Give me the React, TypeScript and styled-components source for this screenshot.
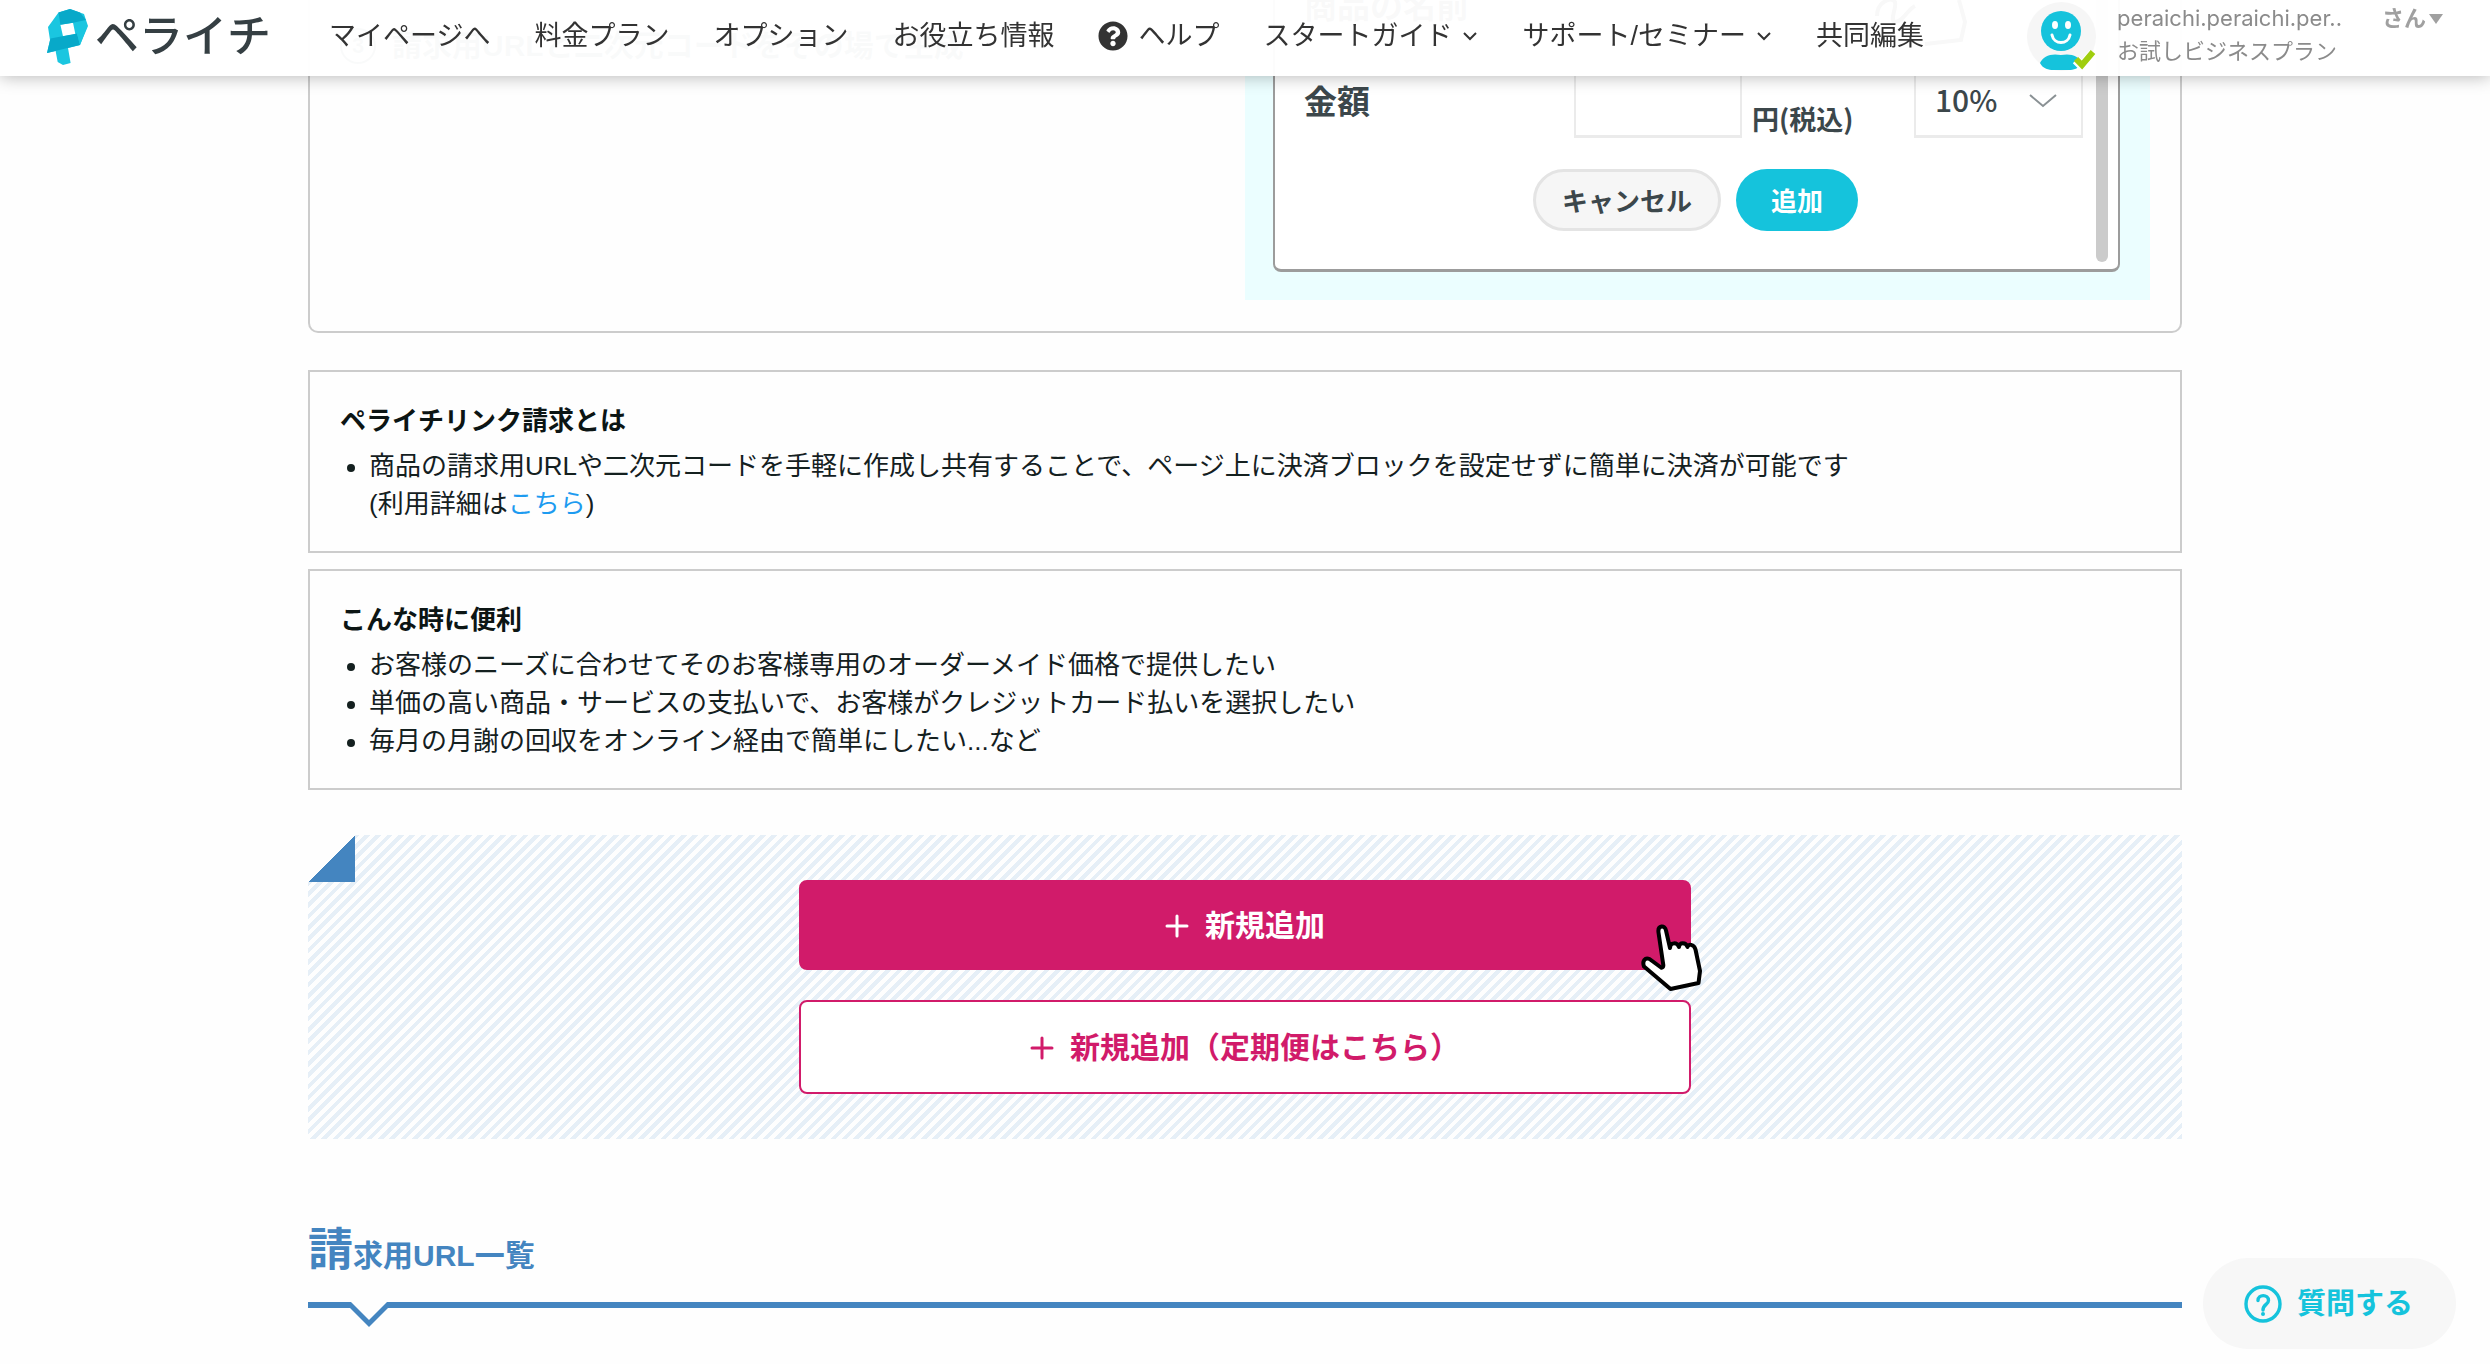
import React from 'react';
import styled, { createGlobalStyle } from 'styled-components';

const color = {
  text: '#14201f',
  navText: '#333333',
  muted: '#8b8b8b',
  line: '#cccccc',
  cyan: '#15c3dc',
  blue: '#4485c0',
  pink: '#d11b6a',
  link: '#1d9bf0',
};

const GlobalStyle = createGlobalStyle`
  *, *::before, *::after { box-sizing: border-box; }
  body {
    margin: 0;
    background: #fefefe;
    color: ${color.text};
    font-family: "Liberation Sans", "Noto Sans CJK JP", sans-serif;
    font-size: 26px;
    line-height: 38px;
  }
  button, input, select { font: inherit; color: inherit; margin: 0; }
  a { color: inherit; text-decoration: none; }
`;

/* ---------- header ---------- */

const Header = styled.header`
  position: fixed;
  inset: 0 0 auto 0;
  z-index: 10;
  height: 76px;
  display: flex;
  align-items: flex-start;
  padding: 0 47px;
  background: rgba(255, 255, 255, 0.97);
  box-shadow: 0 1px 16px rgba(0, 0, 0, 0.28);
`;

const Brand = styled.a`
  display: flex;
  align-items: center;
  gap: 6px;
  height: 74px;
  margin-right: 58px;
  color: #353f43;
  font-size: 44px;
  font-weight: 500;
  white-space: nowrap;
`;

const Nav = styled.nav`
  display: flex;
  align-items: center;
  gap: 44px;
  height: 72px;
  color: ${color.navText};
  font-size: 27px;
  white-space: nowrap;
`;

const NavLink = styled.a`
  display: flex;
  align-items: center;
  gap: 10px;
`;

const User = styled.div`
  display: flex;
  align-items: flex-start;
  margin-left: auto;
  padding-top: 2px;
  color: ${color.muted};
  font-size: 22px;
  line-height: 33px;
  white-space: nowrap;
`;

const UserNames = styled.div`
  margin: 0 40px 0 21px;
  font-family: Inter, "Noto Sans CJK JP", sans-serif;
`;

const UserMenu = styled.button`
  display: flex;
  align-items: center;
  gap: 3px;
  padding: 0;
  border: 0;
  background: none;
  color: #a0a0a0;
  font-weight: 700;
`;

/* ---------- page ---------- */

const Main = styled.main`
  width: 100%;
  max-width: 1874px;
  min-height: 100vh;
  margin: 0 auto;
  padding-bottom: 30px;
`;

const StepCard = styled.section`
  display: flex;
  justify-content: space-between;
  padding: 0 30px 31px 30px;
  border: 2px solid ${color.line};
  border-top: 0;
  border-radius: 0 0 10px 10px;
`;

const StepTitle = styled.h2`
  display: flex;
  align-items: center;
  gap: 16px;
  align-self: flex-start;
  margin: 0;
  padding-top: 27px;
  font-size: 30px;
  line-height: 38px;
  color: #53696e;
`;

const StepNumber = styled.span`
  width: 36px;
  height: 36px;
  border: 2px solid #53696e;
  border-radius: 50%;
  font-size: 22px;
  line-height: 32px;
  text-align: center;
`;

const Preview = styled.div`
  width: 905px;
  padding: 0 30px 28px 28px;
  background: #ebfeff;
`;

const Dialog = styled.form`
  position: relative;
  padding: 0 35px 38px 29px;
  border: 2px solid #9c9c9c;
  border-top: 0;
  border-bottom-width: 3px;
  border-radius: 0 0 8px 8px;
  background: #fff;
  color: #3c474b;
  font-family: "Noto Sans CJK JP", sans-serif;
  font-weight: 700;
`;

const DialogScroll = styled.div`
  position: absolute;
  top: 0;
  right: 10px;
  bottom: 7px;
  width: 12px;
  border-radius: 0 0 6px 6px;
  background: #cbcbcb;
`;

const HandHint = styled.svg`
  position: absolute;
  top: 0;
  left: 598px;
`;

const FieldTitle = styled.div`
  font-size: 33px;
  line-height: 8px;
`;

const FieldRow = styled.div`
  display: flex;
  align-items: center;
  padding-top: 54px;
`;

const FieldLabel = styled.label`
  width: 270px;
  font-size: 33px;
`;

const FieldInput = styled.input`
  width: 168px;
  height: 76px;
  border: 2px solid #ebebeb;
  border-bottom-width: 3px;
  background: #fff;
`;

const FieldUnit = styled.span`
  flex: 1;
  padding: 38px 0 0 10px;
  font-size: 27px;
`;

const SelectBox = styled.div`
  position: relative;
  width: 169px;
  svg { position: absolute; right: 26px; top: 32px; pointer-events: none; }
`;

const FieldSelect = styled.select`
  appearance: none;
  width: 100%;
  height: 76px;
  padding: 0 0 2px 19px;
  border: 2px solid #ebebeb;
  border-bottom-width: 3px;
  border-radius: 0;
  background: #fff;
  font-size: 30px;
  font-weight: 500;
`;

const DialogActions = styled.div`
  display: flex;
  justify-content: center;
  gap: 15px;
  padding: 31px 0 0 4px;
`;

const PillButton = styled.button<{ $primary?: boolean }>`
  height: 62px;
  padding: 0 ${(p) => (p.$primary ? 35 : 26)}px;
  border: ${(p) => (p.$primary ? '0' : '3px solid #e4e4e4')};
  border-radius: 31px;
  background: ${(p) => (p.$primary ? color.cyan : '#f6f6f6')};
  color: ${(p) => (p.$primary ? '#fff' : '#3c474b')};
  font-weight: 700;
`;

const InfoBox = styled.section`
  padding: 30px 30px 28px;
  border: 2px solid ${color.line};
`;

const InfoStack = styled.div`
  display: grid;
  gap: 16px;
  margin-top: 37px;
`;

const InfoTitle = styled.h3`
  margin: 0 0 7px;
  font-size: 26px;
  line-height: 38px;
  color: #0c1514;
`;

const InfoList = styled.ul`
  margin: 0;
  padding: 0 0 0 29px;
  list-style: none;
`;

const InfoItem = styled.li`
  position: relative;
  &::before {
    content: "";
    position: absolute;
    left: -22px;
    top: 17px;
    width: 8px;
    height: 8px;
    border-radius: 50%;
    background: ${color.text};
  }
`;

const InfoLink = styled.a`
  color: ${color.link};
`;

const ActionPanel = styled.section`
  position: relative;
  display: flex;
  flex-direction: column;
  align-items: center;
  gap: 30px;
  margin-top: 45px;
  padding: 45px 0;
  background: repeating-linear-gradient(-45deg, #e6eff7 0 4px, #fefefe 4px 8px);
  &::before {
    content: "";
    position: absolute;
    top: 0;
    left: 0;
    width: 47px;
    height: 47px;
    background: linear-gradient(135deg, #fefefe 50%, ${color.blue} 50%);
  }
`;

const AddButton = styled.button<{ $outline?: boolean }>`
  display: flex;
  align-items: center;
  justify-content: center;
  gap: 16px;
  width: 100%;
  height: ${(p) => (p.$outline ? 94 : 90)}px;
  padding: 2px 0 0;
  border: 2px solid ${color.pink};
  border-radius: 8px;
  background: ${(p) => (p.$outline ? '#fff' : color.pink)};
  color: ${(p) => (p.$outline ? color.pink : '#fff')};
  font-size: 30px;
  font-weight: 700;
`;

const ButtonSlot = styled.div`
  position: relative;
  width: 892px;
  max-width: 90%;
`;

const CursorDrawing = styled.svg`
  position: absolute;
  right: -12px;
  top: 44px;
`;

const ListHeading = styled.h2`
  margin: 82px 0 0;
  color: ${color.blue};
  font-size: 30px;
  line-height: 60px;
  &::first-letter { font-size: 45px; }
`;

const HeadingRule = styled.div`
  display: flex;
  align-items: flex-start;
  margin-top: 16px;
  &::before, &::after {
    content: "";
    height: 6px;
    background: ${color.blue};
  }
  &::before { width: 42px; }
  &::after { flex: 1; }
`;

const AskButton = styled.button`
  position: fixed;
  right: 34px;
  bottom: 15px;
  display: flex;
  align-items: center;
  gap: 15px;
  height: 91px;
  padding: 0 43px 0 41px;
  border: 0;
  border-radius: 46px;
  background: #f7f7f7;
  color: ${color.cyan};
  font-size: 29px;
  font-weight: 700;
`;

/* ---------- drawings ---------- */

const LogoMark = () => (
  <svg width="42" height="57" viewBox="0 0 42 57" aria-hidden="true">
    <path
      fillRule="evenodd"
      d="M11.500 3.500 L23 0 L37 5 L41 17 L33 36 L21 39 L23.600 54 L16 56 L10.700 53 L8.600 42 L0 44 L3 31 L1 18 Z M13.400 15.700 L16 27.300 L28.400 25.300 L26 13.700 Z"
      fill="#1ac6e0"
    />
    <path d="M11.500 3.500 L23 0 L33 3.500 L39 11 L26 13.700 L13.400 15.700 Z" fill="#08a9c9" />
    <path d="M3.500 29.500 L30 24.500 L33 36 L0 44 Z" fill="#08a9c9" />
    <path d="M30 24.500 L40 18 L33 36 Z" fill="#1ac6e0" />
  </svg>
);

const ChevronSmall = () => (
  <svg width="16" height="10" viewBox="0 0 16 10" fill="none" stroke="#333" strokeWidth="2" aria-hidden="true">
    <path d="M2 2 L8 8 L14 2" />
  </svg>
);

const HelpSolid = () => (
  <svg width="30" height="30" viewBox="0 0 512 512" aria-hidden="true">
    <path
      fill="#333"
      d="M504 256c0 137-111 248-248 248S8 393 8 256C8 119 119 8 256 8s248 111 248 248zM262.700 90c-54.500 0-89.300 23-116.500 63.800-3.500 5.300-2.400 12.400 2.700 16.300l34.700 26.300c5.200 3.900 12.600 3 16.700-2.100 17.900-22.700 30.100-35.800 57.300-35.800 20.400 0 45.700 13.100 45.700 33 0 15-12.400 22.700-32.500 34C247.100 238.500 216 254.900 216 296v4c0 6.600 5.400 12 12 12h56c6.600 0 12-5.400 12-12v-1.300c0-28.500 83.200-29.600 83.200-106.700 0-58-60.200-102-116.500-102zM256 338c-25.400 0-46 20.600-46 46s20.600 46 46 46 46-20.600 46-46-20.600-46-46-46z"
    />
  </svg>
);

const Avatar = () => (
  <svg width="69" height="70" viewBox="0 0 69 70" aria-hidden="true">
    <circle cx="34.500" cy="34.500" r="34.500" fill="#f6f6f6" />
    <circle cx="34" cy="29" r="20" fill={color.cyan} />
    <path d="M13 61 C16 54 24 51 34 53 C44 51 52 54 55 61 C52 67 46 68 42 68 H26 C22 68 16 67 13 61 Z" fill={color.cyan} />
    <ellipse cx="28" cy="23" rx="3" ry="4" fill="#fff" />
    <ellipse cx="41" cy="23" rx="3" ry="4" fill="#fff" />
    <path d="M25 33 C27 43 41 43 43 33" fill="none" stroke="#fff" strokeWidth="3" strokeLinecap="round" />
    <path d="M49 58 L55 64 L66 51" fill="none" stroke="#fff" strokeWidth="9" />
    <path d="M49 57 L55 63 L66 50" fill="none" stroke="#a0ce0e" strokeWidth="6" />
  </svg>
);

const PlusIcon = () => (
  <svg width="24" height="24" viewBox="0 0 24 24" fill="none" stroke="currentColor" strokeWidth="3" strokeLinecap="round" aria-hidden="true">
    <path d="M12 2 V22 M2 12 H22" />
  </svg>
);

const HandCursor = () => (
  <CursorDrawing width="62" height="68" viewBox="0 0 62 68" aria-hidden="true">
    <path
      d="M17.500 8.500 C16.500 1 24 0.800 25 6.500 L29 24 C29 18 36 18 38 23 C38 18 45 18 46.500 23 C47 19.500 53 20 54.500 25.500 L59 47 L57.500 59 L29.500 65 L3 42.500 C1 37 4 33 8.500 35 L20 43.500 C21.500 44 22.500 43 22.300 41 Z"
      fill="#fff"
      stroke="#000"
      strokeWidth="4"
      strokeLinejoin="round"
    />
  </CursorDrawing>
);

const RuleNotch = () => (
  <svg width="38" height="26" viewBox="0 0 38 26" aria-hidden="true">
    <path d="M0 0 H1 L19 18 L37 0 H38 V6 L19 25 L0 6 Z" fill={color.blue} />
  </svg>
);

const HelpOutline = () => (
  <svg width="38" height="38" viewBox="0 0 38 38" fill="none" stroke="currentColor" strokeWidth="3.400" aria-hidden="true">
    <circle cx="19" cy="19" r="17" />
    <path d="M14 15.500 C14 9 24.500 9 24.500 15.500 C24.500 19.500 19 19.500 19 25" strokeLinecap="round" />
    <circle cx="19" cy="29" r="2" fill="currentColor" stroke="none" />
  </svg>
);

/* ---------- content ---------- */

const navItems: { label: string; help?: boolean; menu?: boolean }[] = [
  { label: 'マイページへ' },
  { label: '料金プラン' },
  { label: 'オプション' },
  { label: 'お役立ち情報' },
  { label: 'ヘルプ', help: true },
  { label: 'スタートガイド', menu: true },
  { label: 'サポート/セミナー', menu: true },
  { label: '共同編集' },
];

const useCases = [
  'お客様のニーズに合わせてそのお客様専用のオーダーメイド価格で提供したい',
  '単価の高い商品・サービスの支払いで、お客様がクレジットカード払いを選択したい',
  '毎月の月謝の回収をオンライン経由で簡単にしたい...など',
];

export default function App() {
  return (
    <>
      <GlobalStyle />
      <Header>
        <Brand href="#">
          <LogoMark />
          ペライチ
        </Brand>
        <Nav>
          {navItems.map((item) => (
            <NavLink href="#" key={item.label}>
              {item.help && <HelpSolid />}
              {item.label}
              {item.menu && <ChevronSmall />}
            </NavLink>
          ))}
        </Nav>
        <User>
          <Avatar />
          <UserNames>
            <div>peraichi.peraichi.per..</div>
            <div>お試しビジネスプラン</div>
          </UserNames>
          <UserMenu type="button">
            さん
            <svg width="14" height="10" viewBox="0 0 14 10" aria-hidden="true">
              <path d="M0 0 H14 L7 10 Z" fill="currentColor" />
            </svg>
          </UserMenu>
        </User>
      </Header>

      <Main>
        <StepCard>
          <StepTitle>
            <StepNumber>3</StepNumber>
            請求用URLと二次元コードをその場で生成
          </StepTitle>
          <Preview>
            <Dialog>
              <FieldTitle>商品の名前</FieldTitle>
              <FieldRow>
                <FieldLabel htmlFor="price">金額</FieldLabel>
                <FieldInput id="price" type="text" />
                <FieldUnit>円(税込)</FieldUnit>
                <SelectBox>
                  <FieldSelect aria-label="税率" defaultValue="10">
                    <option value="10">10%</option>
                  </FieldSelect>
                  <svg width="28" height="14" viewBox="0 0 28 14" fill="none" stroke="#8a9194" strokeWidth="2" aria-hidden="true">
                    <path d="M1 1 L14 12 L27 1" />
                  </svg>
                </SelectBox>
              </FieldRow>
              <DialogActions>
                <PillButton type="button">キャンセル</PillButton>
                <PillButton type="button" $primary>追加</PillButton>
              </DialogActions>
              <DialogScroll />
              <HandHint width="96" height="48" viewBox="0 0 96 48" fill="none" stroke="#222" strokeWidth="4" aria-hidden="true">
                <path d="M4 16 C4 2 18 -4 22 2 C24 8 16 20 22 22 C30 22 34 10 42 6" />
                <path d="M86 0 L92 22 L88 40 L52 44" />
              </HandHint>
            </Dialog>
          </Preview>
        </StepCard>

        <InfoStack>
          <InfoBox>
            <InfoTitle>ペライチリンク請求とは</InfoTitle>
            <InfoList>
              <InfoItem>
                商品の請求用URLや二次元コードを手軽に作成し共有することで、ページ上に決済ブロックを設定せずに簡単に決済が可能です
                <br />
                (利用詳細は<InfoLink href="#">こちら</InfoLink>)
              </InfoItem>
            </InfoList>
          </InfoBox>
          <InfoBox>
            <InfoTitle>こんな時に便利</InfoTitle>
            <InfoList>
              {useCases.map((text) => (
                <InfoItem key={text}>{text}</InfoItem>
              ))}
            </InfoList>
          </InfoBox>
        </InfoStack>

        <ActionPanel>
          <ButtonSlot>
            <AddButton type="button">
              <PlusIcon />
              新規追加
            </AddButton>
            <HandCursor />
          </ButtonSlot>
          <ButtonSlot>
            <AddButton type="button" $outline>
              <PlusIcon />
              新規追加（定期便はこちら）
            </AddButton>
          </ButtonSlot>
        </ActionPanel>

        <ListHeading>請求用URL一覧</ListHeading>
        <HeadingRule>
          <RuleNotch />
        </HeadingRule>
      </Main>

      <AskButton type="button">
        <HelpOutline />
        質問する
      </AskButton>
    </>
  );
}
